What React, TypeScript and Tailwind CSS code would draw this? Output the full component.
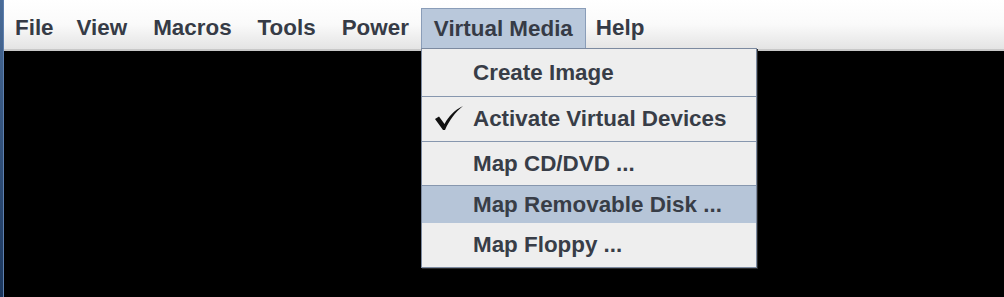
import React from 'react';

const menus = ['File', 'View', 'Macros', 'Tools', 'Power', 'Virtual Media', 'Help'];

const items = [
  { label: 'Create Image', h: 'h-[48px]', sep: true },
  { label: 'Activate Virtual Devices', h: 'h-[45px]', sep: true, checked: true },
  { label: 'Map CD/DVD ...', h: 'h-[44px]', sep: true },
  { label: 'Map Removable Disk ...', h: 'h-[37px]', active: true },
  { label: 'Map Floppy ...', h: 'h-[44px]' },
];

const CheckMark = () => (
  <svg width="30" height="26" viewBox="0 0 30 26" className="absolute left-[12px] top-[8px]">
    <path d="M1 14 L5 11.5 L10.5 19 C15 11 20 5.5 29 1 C21 7.5 15.5 15 11 25 L9 25 Z" fill="#111" />
  </svg>
);

const App: React.FC = () => {
  return (
    <div className="flex w-[1004px] h-[297px] bg-black overflow-hidden" style={{ fontFamily: '"Liberation Sans", Arial, sans-serif' }}>
      <div className="w-[4px] shrink-0 bg-gradient-to-b from-[#4a6c98] to-[#1b365c] border-r border-[#5d7fae]" />
      <div className="flex-1 relative">
        <div className="h-[51px] bg-gradient-to-b from-white via-[#fafafa] to-[#e4e4e4] border-b-2 border-[#c8c8c8] flex items-start pt-[8px]">
          {menus.map((m, i) => {
            let pad = 'px-[13px]';
            if (i === 0) pad = 'pl-[11px] pr-[10px]';
            if (m === 'Power') pad = 'pl-[13px] pr-[12px]';
            if (m === 'Help') pad = 'pl-[10px] pr-[13px]';
            if (m === 'Virtual Media') pad = 'px-[12px] bg-[#b9c8db] border border-b-0 border-[#8a9db8]';
            return (
              <div
                key={m}
                className={`h-[40px] flex items-center text-[22.4px] font-bold text-[#363b46] ${pad}`}
              >
                {m}
              </div>
            );
          })}
        </div>

        <div className="absolute left-[417px] top-[48px] w-[336px] bg-[#eeeeee] border border-[#7c8aa0] shadow-[1px_1px_0_#2a2a2a]">
          {items.map(it => (
            <div
              key={it.label}
              className={`relative flex items-center pl-[51px] text-[22.4px] font-bold text-[#383d47] ${it.h} ${
                it.active ? 'bg-[#b6c5d8]' : 'bg-[#eeeeee]'
              } ${it.sep ? 'border-b border-[#8797ae]' : ''}`}
            >
              {it.checked && <CheckMark />}
              {it.label}
            </div>
          ))}
        </div>
      </div>
    </div>
  );
};

export default App;
